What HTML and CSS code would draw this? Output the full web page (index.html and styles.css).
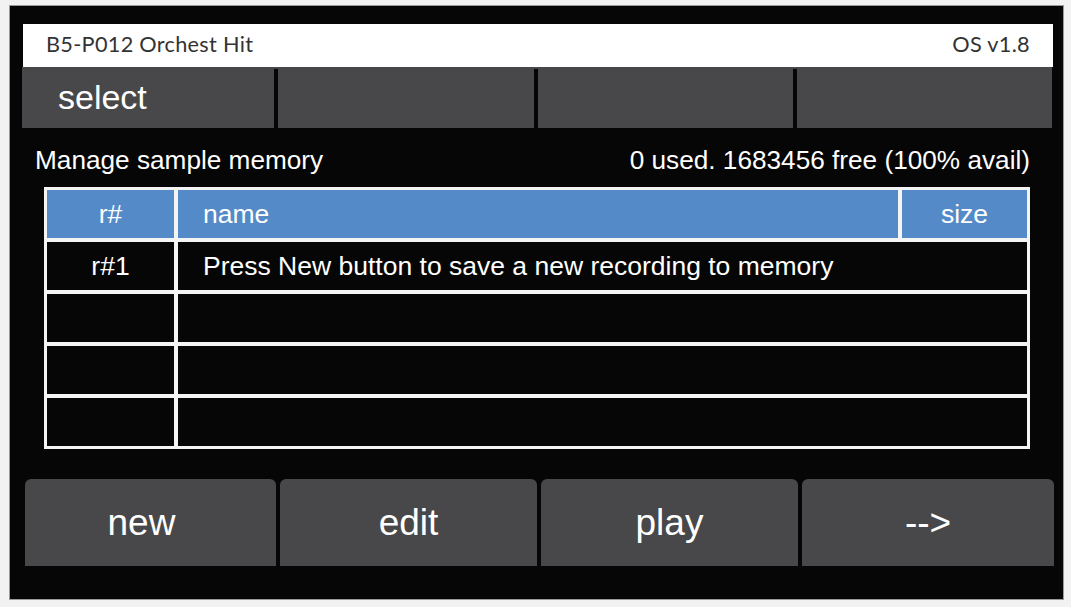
FILE: index.html
```html
<!DOCTYPE html>
<html lang="en">
<head>
    <meta charset="UTF-8">
    <meta name="viewport" content="width=device-width, initial-scale=1.0">
    <title>Sample Memory</title>
    <link rel="stylesheet" href="styles.css">
</head>
<body>

<div class="screen">
    <div class="title-bar">
        <span>B5-P012 Orchest Hit</span>
        <span>OS v1.8</span>
    </div>

    <div class="soft-keys">
        <div class="soft-key">select</div>
        <div class="soft-key"></div>
        <div class="soft-key"></div>
        <div class="soft-key"></div>
    </div>

    <div class="info">
        <span>Manage sample memory</span>
        <span>0 used. 1683456 free (100% avail)</span>
    </div>

    <div class="grid">
        <div class="cell head center">r#</div>
        <div class="cell head">name</div>
        <div class="cell head center">size</div>

        <div class="cell center">r#1</div>
        <div class="cell wide">Press New button to save a new recording to memory</div>

        <div class="cell"></div>
        <div class="cell wide"></div>

        <div class="cell"></div>
        <div class="cell wide"></div>

        <div class="cell"></div>
        <div class="cell wide"></div>
    </div>

    <div class="buttons">
        <div class="button">new</div>
        <div class="button">edit</div>
        <div class="button">play</div>
        <div class="button">--&gt;</div>
    </div>
</div>

</body>
</html>
```

FILE: styles.css
```css
body {
    margin: 0;
    padding: 5px 0 0 9px;
    background-color: #f2f2f2;
    font-family: 'Liberation Sans', Arial, sans-serif;
}

.screen {
    width: 1055px;
    height: 595px;
    box-sizing: border-box;
    background: #060606;
    border: 1px solid #9a9a9a;
    padding-top: 18px;
    display: flex;
    flex-direction: column;
}

.title-bar {
    height: 43px;
    margin: 0 10px 0 13px;
    padding: 0 23px 3px 23px;
    box-sizing: border-box;
    background: white;
    color: #333;
    font-family: 'Lato', sans-serif;
    font-size: 21.7px;
    letter-spacing: 0.3px;
    display: flex;
    justify-content: space-between;
    align-items: center;
}

.soft-keys {
    height: 61px;
    margin: 0 11px 0 12px;
    padding-top: 2px;
    box-sizing: border-box;
    background: #48484a;
    display: flex;
}

.soft-key {
    flex: 1 1 256px;
    box-sizing: border-box;
    color: white;
    font-size: 34px;
    padding: 0 0 2px 36px;
    display: flex;
    align-items: center;
}

.soft-key:first-child {
    flex-basis: 249px;
}

.soft-key + .soft-key {
    border-left: 4px solid #060606;
}

.info {
    height: 59px;
    margin: 0 33px 0 25px;
    padding-top: 5px;
    box-sizing: border-box;
    color: white;
    font-size: 26.2px;
    display: flex;
    justify-content: space-between;
    align-items: center;
}

.grid {
    margin: 0 33px 0 34px;
    padding: 3px;
    background: #f4f4f4;
    display: grid;
    grid-template-columns: 127px 1fr 125px;
    grid-auto-rows: 48px;
    gap: 4px;
}

.cell {
    background: #060606;
    color: white;
    font-size: 26.5px;
    padding-left: 25px;
    display: flex;
    align-items: center;
}

.cell.wide {
    grid-column: span 2;
}

.cell.head {
    background: #548ac8;
}

.cell.center {
    padding-left: 0;
    justify-content: center;
}

.buttons {
    height: 87px;
    margin: 30px 9px 0 15px;
    display: flex;
    gap: 4px;
}

.button {
    flex: 1 1 257px;
    box-sizing: border-box;
    background: #48484a;
    border-radius: 6px 6px 0 0;
    color: white;
    font-size: 37px;
    display: flex;
    justify-content: center;
    align-items: center;
}

.button:first-child {
    flex-basis: 251px;
    padding-right: 18px;
}

.button:last-child {
    flex-basis: 252px;
}
```
